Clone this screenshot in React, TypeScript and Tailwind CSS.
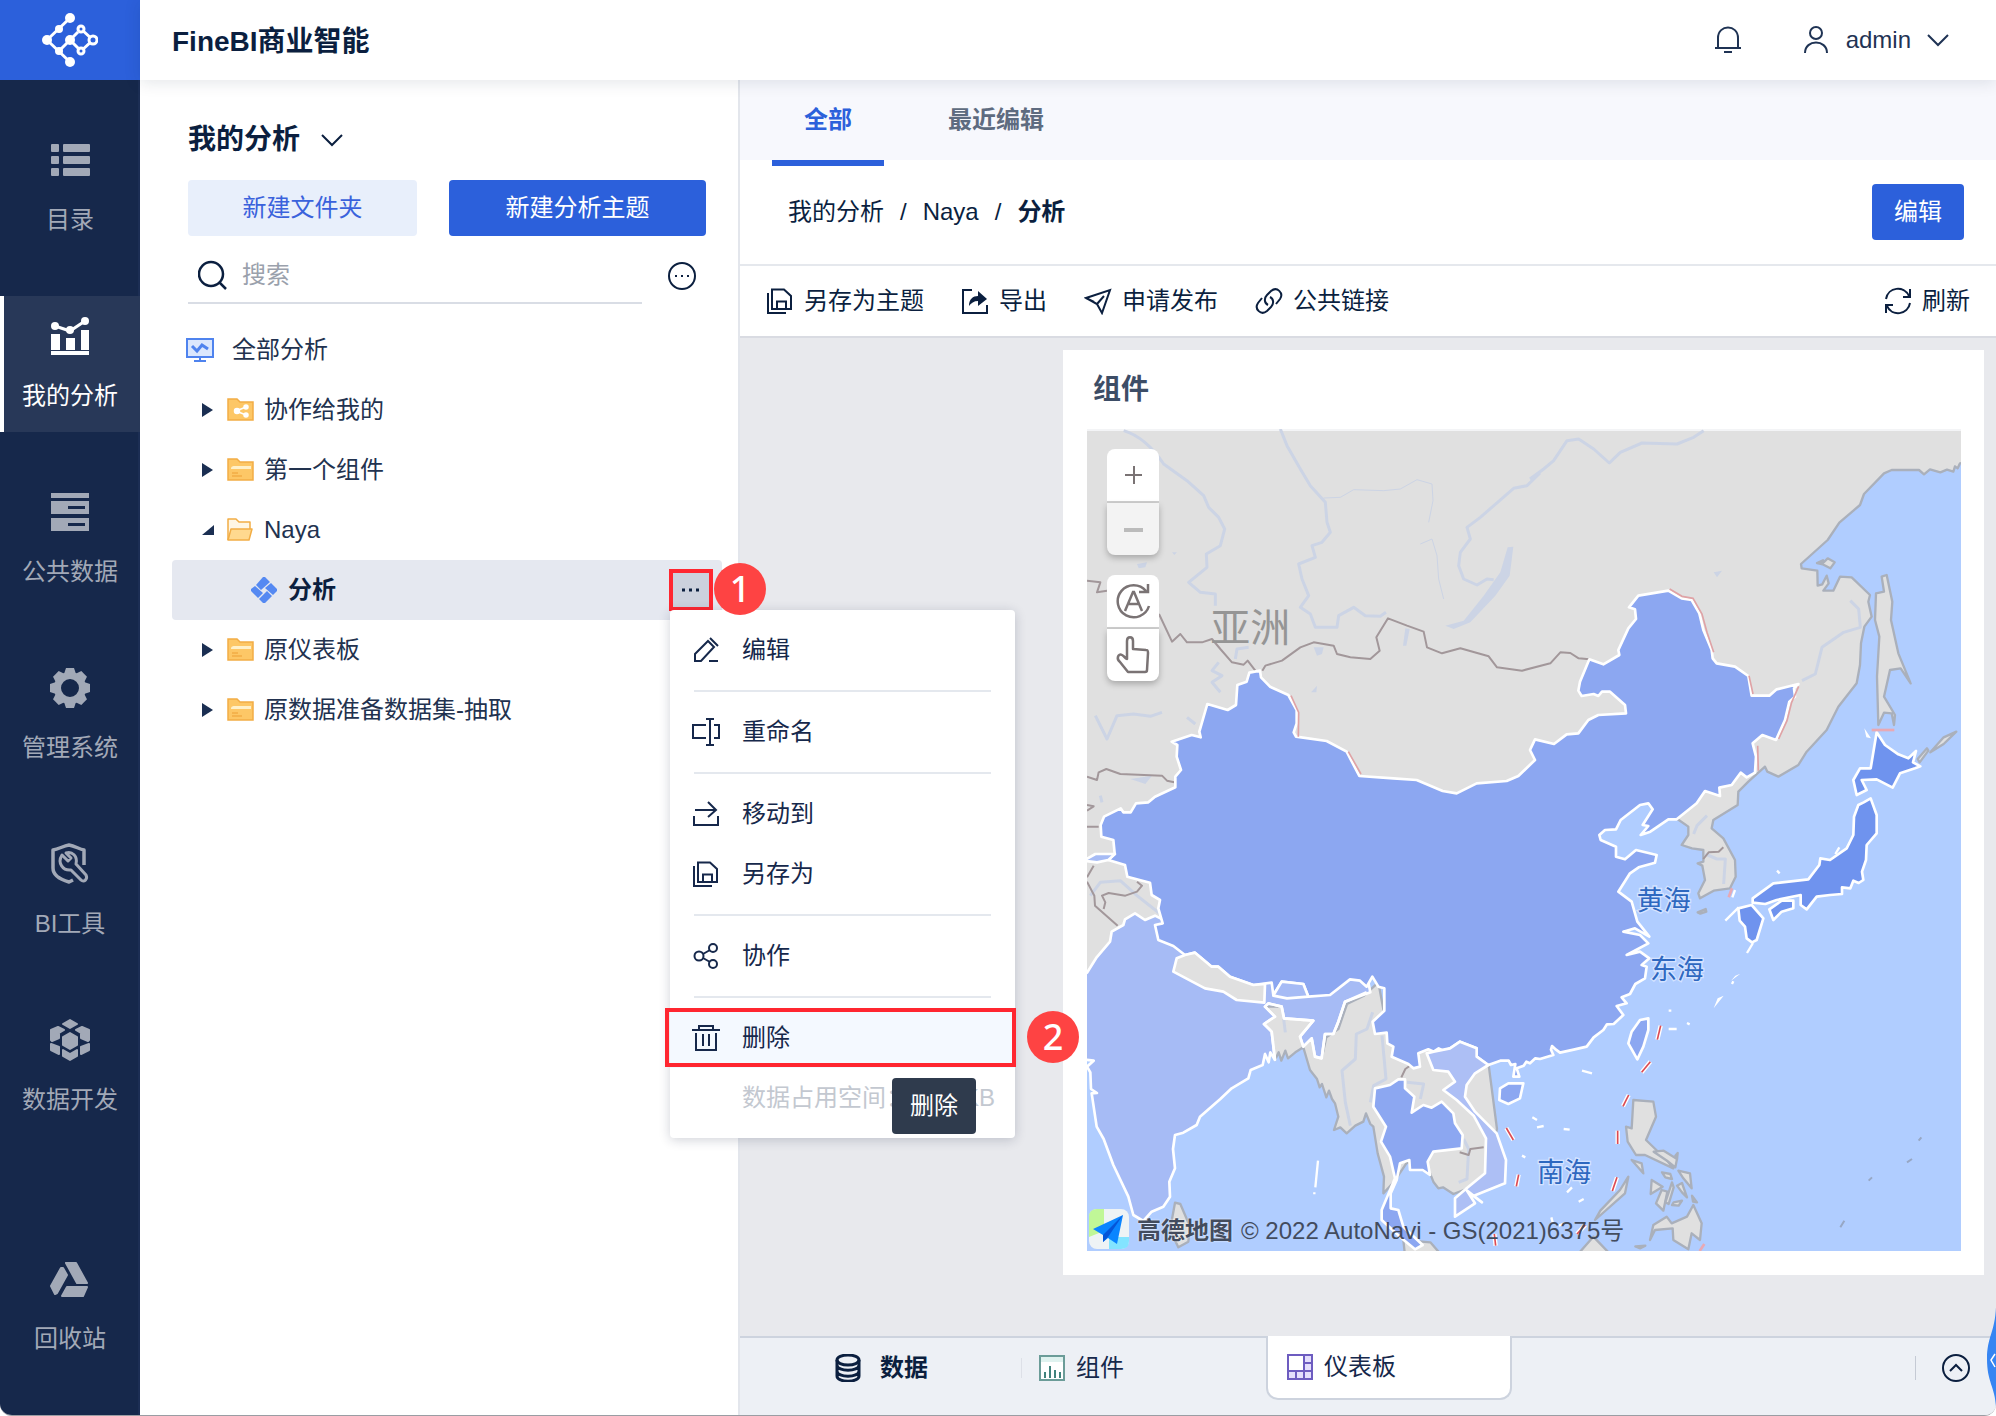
import type { ReactNode } from 'react'

interface IconProps {
  children: ReactNode
  className?: string
}

interface MenuItem {
  label: string
  icon: ReactNode
  divider?: boolean
  active?: boolean
}

function Icon({ children, className = '' }: IconProps) {
  return (
    <svg
      viewBox="0 0 28 28"
      fill="none"
      stroke="currentColor"
      strokeWidth="2"
      aria-hidden="true"
      className={`h-7 w-7 shrink-0 ${className}`}
    >
      {children}
    </svg>
  )
}

const saveAsIcon = (
  <Icon>
    <path d="M6 2.5 H18 L25 9 V22 H6 Z M11 22 V14.5 H20 V22 M2 6 V26 H20" />
  </Icon>
)

const chevronDown = (
  <svg viewBox="0 0 22 14" fill="none" stroke="currentColor" strokeWidth="2" aria-hidden="true" className="h-[14px] w-[22px] shrink-0">
    <path d="M1 2 L11 12 L21 2" />
  </svg>
)

const gearAngles = [0, 45, 90, 135, 180, 225, 270, 315]

const navItems = [
  {
    label: '目录',
    icon: (
      <>
        <rect x="1" y="4" width="8" height="8" rx="1" />
        <rect x="13" y="4" width="27" height="8" rx="1" />
        <rect x="1" y="16" width="8" height="8" rx="1" />
        <rect x="13" y="16" width="27" height="8" rx="1" />
        <rect x="1" y="28" width="8" height="8" rx="1" />
        <rect x="13" y="28" width="27" height="8" rx="1" />
      </>
    ),
  },
  {
    label: '我的分析',
    active: true,
    icon: (
      <>
        <path d="M1 18h9v16H1zM16 22h9v12h-9zM31 14h8v20h-8zM1 35h38v4H1z" />
        <path d="M5 10 L20 15 L35 5" fill="none" stroke="currentColor" strokeWidth="3" />
        <circle cx="5" cy="10" r="4" />
        <circle cx="20" cy="14" r="4" />
        <circle cx="35" cy="5" r="4" />
      </>
    ),
  },
  {
    label: '公共数据',
    icon: (
      <path
        fillRule="evenodd"
        d="M1 1h38v5H1zM1 9h38v13H1zM18 14v3h17v-3zM1 26h38v13H1zM18 31v3h17v-3z"
      />
    ),
  },
  {
    label: '管理系统',
    icon: (
      <>
        <circle cx="20" cy="20" r="12.5" fill="none" stroke="currentColor" strokeWidth="7" />
        {gearAngles.map((angle) => (
          <path key={angle} d="M14 6 L16 0 H24 L26 6 Z" transform={`rotate(${angle} 20 20)`} />
        ))}
      </>
    ),
  },
  {
    label: 'BI工具',
    icon: (
      <g fill="none" stroke="currentColor" strokeLinejoin="round">
        <path d="M23 36 L19 38 C12 36 3 32 3 24 V6 C9 5 13 2 19 1 C25 2 29 5 34 6 V21" strokeWidth="3.5" />
        <path d="M12 11 L18 17 L21 14 L16 9 C22 7 28 12 26 20 L36 31 C38 35 34 39 31 36 L21 26 C13 27 7 19 12 11 Z" strokeWidth="3" />
      </g>
    ),
  },
  {
    label: '数据开发',
    icon: (
      <g stroke="currentColor" strokeLinejoin="round" strokeWidth="2">
        <path d="M20 0 L27 4 L20 8 L13 4Z" />
        <path d="M20 13 L27 17 V25 L20 29 L13 25 V17Z" />
        <path d="M8 7 L14 10 L9 13 V18 L2 21 L1 20 V10Z" />
        <path d="M32 7 L26 10 L31 13 V18 L38 21 L39 20 V10Z" />
        <path d="M1 24 L9 27 V34 L1 30Z" />
        <path d="M39 24 L31 27 V34 L39 30Z" />
        <path d="M13 30 L20 34 L27 30 V36 L20 40 L13 36Z" />
      </g>
    ),
  },
  {
    label: '回收站',
    bottom: true,
    icon: (
      <g stroke="currentColor" strokeLinejoin="round" strokeWidth="2">
        <path d="M16 4 H26 L37 24 H27 Z" />
        <path d="M11 9 H13 L17 16 L7 34 L5 35 L1 27 Z" />
        <path d="M17 28 H37 L33 37 H12 Z" />
      </g>
    ),
  },
]

const menuItems: MenuItem[] = [
  {
    label: '编辑',
    divider: true,
    icon: (
      <Icon>
        <path d="M3 25 V18 L16 5 L22 11 L9 25 Z M18 2 L26 10 M17 25 H26" />
      </Icon>
    ),
  },
  {
    label: '重命名',
    divider: true,
    icon: (
      <Icon>
        <path d="M14 7 H1 V20 H14 M22 7 H27 V20 H22 M18 1 V27 M14 1 H22 M14 27 H22" />
      </Icon>
    ),
  },
  {
    label: '移动到',
    icon: (
      <Icon>
        <path d="M3 10 H24 M16 2 L24 10 L16 17 M2 16 V25 H26 V16" />
      </Icon>
    ),
  },
  { label: '另存为', divider: true, icon: saveAsIcon },
  {
    label: '协作',
    divider: true,
    icon: (
      <Icon>
        <circle cx="7" cy="14" r="4.5" />
        <circle cx="21" cy="6" r="4" />
        <circle cx="21" cy="22" r="4" />
        <path d="M11 12 L18 8 M11 16 L18 20" />
      </Icon>
    ),
  },
  {
    label: '删除',
    active: true,
    icon: (
      <Icon>
        <path d="M0 6 H28 M7 6 V2 H21 V6 M4 9 V26 H24 V9 M11 10 V22 M17 10 V22" />
      </Icon>
    ),
  },
]

const tools = [
  { label: '另存为主题', icon: saveAsIcon },
  {
    label: '导出',
    icon: (
      <Icon>
        <path d="M11 3 H2 V26 H26 V18" />
        <path d="M8 19 C8 12 12 9 17 9 V4 L26 12 L17 19 V14 C13 14 10 16 8 19 Z" fill="currentColor" stroke="none" />
      </Icon>
    ),
  },
  {
    label: '申请发布',
    icon: (
      <Icon>
        <path d="M2 11 L26 3 L18 26 L13 17 Z M13 17 L20 9 M2 11 L10 15" />
      </Icon>
    ),
  },
  {
    label: '公共链接',
    icon: (
      <Icon>
        <path d="M13 18 C9 16 9 11 12 8 L16 4 C22 -1 29 6 25 12 L21 17 M15 10 C19 12 19 17 16 20 L12 24 C6 29 -1 22 3 16 L7 11" />
      </Icon>
    ),
  },
]

function Sidebar() {
  return (
    <nav className="flex w-[140px] shrink-0 flex-col bg-[#16284b]">
      <a href="#home" aria-label="FineBI" className="flex h-20 shrink-0 items-center justify-center bg-[#2c60db] text-white">
        <svg viewBox="0 0 56 56" fill="currentColor" stroke="currentColor" strokeWidth="3" aria-hidden="true" className="h-14 w-14">
          <path d="M5 28 L28 6 M5 28 L28 50 M17 39 L28 28 L39 39 M39 17 L51 28 L39 39 M28 28 L36 20" fill="none" />
          <g stroke="none">
            <circle cx="28" cy="6" r="5" />
            <circle cx="5" cy="28" r="5" />
            <circle cx="28" cy="28" r="5" />
            <circle cx="28" cy="50" r="5" />
            <circle cx="17" cy="17" r="4" />
            <circle cx="17" cy="39" r="4" />
          </g>
          <g fill="#2c60db">
            <circle cx="39" cy="17" r="3" />
            <circle cx="39" cy="39" r="3" />
            <circle cx="51" cy="28" r="4" />
          </g>
        </svg>
      </a>
      <ul className="flex flex-1 flex-col gap-10 py-10 shadow-[inset_-2px_0_0_#1c2e54]">
        {navItems.map((item) => (
          <li key={item.label} className={item.bottom ? 'mt-auto' : ''}>
            <a
              href="#nav"
              className={`flex h-[136px] flex-col items-center gap-6 pt-5 text-2xl leading-8 ${
                item.active ? 'bg-[#283858] text-white shadow-[inset_4px_0_0_#fff]' : 'text-[#a2a9b7]'
              }`}
            >
              <svg viewBox="0 0 40 40" fill="currentColor" aria-hidden="true" className="h-10 w-10 shrink-0 overflow-visible">
                {item.icon}
              </svg>
              {item.label}
            </a>
          </li>
        ))}
      </ul>
    </nav>
  )
}

function Header() {
  return (
    <header className="relative z-10 flex h-20 shrink-0 items-center justify-between bg-white pl-8 pr-[47px] shadow-[0_2px_16px_rgba(20,30,60,0.12)]">
      <h1 className="pt-1 text-[28px] font-bold leading-10">FineBI商业智能</h1>
      <div className="flex items-center gap-[60px] text-[#1f3354]">
        <button type="button" aria-label="消息">
          <Icon>
            <path d="M1 22 H27 M4 22 V12 C4 -2 24 -2 24 12 V22 M10 26 H18" />
          </Icon>
        </button>
        <button type="button" className="flex items-center gap-4 text-2xl">
          <Icon>
            <circle cx="14" cy="7" r="6" />
            <path d="M3 27 C3 13 25 13 25 27" />
          </Icon>
          admin
          {chevronDown}
        </button>
      </div>
    </header>
  )
}

function Folder({ kind }: { kind: string }) {
  return (
    <svg viewBox="0 0 28 28" aria-hidden="true" className="h-7 w-7 shrink-0">
      {kind === 'open' ? (
        <g stroke="#f2ad45" strokeWidth="1.5" strokeLinejoin="round">
          <path d="M2 24 V3 H10 L13 6 H24 V13" fill="#fff6e3" />
          <path d="M2 24 L5 13 H26 L23 24 Z" fill="#ffd98f" />
        </g>
      ) : (
        <path d="M2 24 V3 H11 L14 6 H27 V24 Z" fill="#fdc766" stroke="#f2ad45" strokeWidth="1.5" />
      )}
      {kind === 'closed' && (
        <>
          <path d="M5 13 C5 10 7 10 9 10 H25 V13 Z" fill="#fff0c8" />
          <path d="M6 17 H12 M6 20 H16" stroke="#f2ad45" strokeWidth="1.5" />
        </>
      )}
      {kind === 'share' && (
        <g fill="#fff" stroke="#fff" strokeWidth="1.5">
          <path d="M10 15 L20 11 M10 15 L20 19" />
          <circle cx="11" cy="15" r="2.5" />
          <circle cx="20" cy="11" r="2" />
          <circle cx="20" cy="19" r="2" />
        </g>
      )}
    </svg>
  )
}

function TreeRow({ label, kind }: { label: string; kind: string }) {
  return (
    <li>
      <button type="button" className="flex h-[60px] w-full items-center pl-[30px] text-left text-2xl text-[#22324f]">
        <svg viewBox="0 0 12 16" fill="#1b2f52" aria-hidden="true" className="mr-3 h-4 w-3 shrink-0">
          {kind === 'open' ? <path d="M12 3 V13 H0 Z" /> : <path d="M0 1 L11 8 L0 15 Z" />}
        </svg>
        <Folder kind={kind} />
        <span className="pl-[10px]">{label}</span>
      </button>
    </li>
  )
}

function Badge({ children, className }: { children: ReactNode; className: string }) {
  return (
    <span
      className={`absolute flex h-[52px] w-[52px] items-center justify-center rounded-full bg-[#fe4343] font-['Noto_Sans',sans-serif] text-4xl font-medium text-white ${className}`}
    >
      {children}
    </span>
  )
}

function ContextMenu() {
  return (
    <ul className="absolute left-px top-[41px] w-[345px] rounded bg-white py-[10px] text-2xl text-[#16284b] shadow-[0_2px_12px_rgba(20,30,60,0.2)]">
      {menuItems.map((item) => (
        <li key={item.label} className="relative">
          <button
            type="button"
            className={`flex h-[60px] w-full items-center gap-[22px] pl-[22px] text-left ${item.active ? 'bg-[#f4f9ff]' : ''}`}
          >
            {item.icon}
            {item.label}
          </button>
          {item.divider && <hr className="mx-6 my-[10px] border-t-2 border-[#e4e8ee]" />}
          {item.active && (
            <>
              <span className="absolute -left-[5px] -right-px top-0 h-[59px] border-4 border-[#ff2630]" />
              <Badge className="left-full top-[3px] ml-3">2</Badge>
              <span role="tooltip" className="absolute left-[222px] top-[70px] z-10 flex h-14 w-[84px] items-center justify-center rounded bg-[#2f3b4d] text-white">
                删除
              </span>
            </>
          )}
        </li>
      ))}
      <li className="flex h-[60px] items-center justify-between whitespace-nowrap pl-[72px] pr-5 text-[#c3c8d0]">
        <span>数据占用空间：</span>
        <span>KB</span>
      </li>
    </ul>
  )
}

function AnalysisPanel() {
  return (
    <aside className="relative z-[5] flex w-[600px] shrink-0 flex-col border-r-2 border-[#e3e6ec] bg-white pl-8 pr-4 pt-10">
      <button type="button" className="flex items-center gap-[21px] self-start pl-4 text-[28px] font-bold leading-10">
        我的分析
        {chevronDown}
      </button>
      <div className="mt-5 flex gap-8 pl-4 pr-4 text-2xl">
        <button type="button" className="h-14 flex-[229] rounded bg-[#e8effb] text-[#3a62dc]">
          新建文件夹
        </button>
        <button type="button" className="h-14 flex-[257] rounded bg-[#2c60db] text-white">
          新建分析主题
        </button>
      </div>
      <div className="mt-2 flex items-center gap-[26px] pl-4 pr-[26px]">
        <label className="flex h-[60px] flex-1 items-center gap-[14px] border-b-2 border-[#d9dde5] pl-[10px] pt-1">
          <svg viewBox="0 0 30 30" fill="none" stroke="currentColor" strokeWidth="2.5" className="h-[30px] w-[30px] shrink-0">
            <circle cx="13" cy="14" r="12" />
            <path d="M21 22 L28 29" />
          </svg>
          <input type="text" aria-label="搜索" placeholder="搜索" className="w-full min-w-0 text-2xl outline-none placeholder:text-[#9aa1ac]" />
        </label>
        <button type="button" aria-label="更多" className="pt-1">
          <Icon>
            <circle cx="14" cy="14" r="13" />
            <path d="M7 14 h2 M13 14 h2 M19 14 h2" />
          </Icon>
        </button>
      </div>
      <ul className="mt-4">
        <li>
          <button type="button" className="flex h-[60px] w-full items-center gap-[18px] pl-[14px] text-left text-2xl text-[#22324f]">
            <Icon className="text-[#4f83ee]">
              <rect x="1" y="3" width="26" height="18" fill="#dbe7fd" />
              <path d="M6 10 L11 15 L16 9 L22 13" strokeWidth="3" />
              <path d="M8 25 H20 M14 21 V25" />
            </Icon>
            全部分析
          </button>
        </li>
        <TreeRow label="协作给我的" kind="share" />
        <TreeRow label="第一个组件" kind="closed" />
        <TreeRow label="Naya" kind="open" />
        <li className="flex h-[60px] items-center justify-between rounded bg-[#e5e8f0] pl-[78px] pr-[9px]">
          <a href="#analysis" className="flex items-center gap-[10px] text-2xl font-bold">
            <svg viewBox="0 0 28 28" fill="#5589f2" aria-hidden="true" className="h-7 w-7 shrink-0">
              <path d="M13 1 H15 L20 6 L11 14 L6 9 Z M21 7 L27 13 V15 L23 19 L15 12 Z M5 10 L13 17 L8 22 L1 15 V13 Z M17 15 L22 20 L15 27 H13 L9 23 Z" />
            </svg>
            分析
          </a>
          <div className="relative">
            <button type="button" aria-label="更多操作" className="flex h-[42px] w-11 items-center justify-center border-4 border-[#ff2630] bg-[#ccd1dd]">
              <Icon>
                <path d="M5 14 h3 M12 14 h3 M19 14 h3" strokeWidth="3" />
              </Icon>
            </button>
            <ContextMenu />
            <Badge className="-top-[6px] left-[45px]">1</Badge>
          </div>
        </li>
        <TreeRow label="原仪表板" kind="closed" />
        <TreeRow label="原数据准备数据集-抽取" kind="closed" />
      </ul>
    </aside>
  )
}

const northLand =
  'M-20 -20 H2642 V98 L2619 103 L2612 118 L2604 112 L2599 128 L2580 122 L2560 130 L2529 121 L2511 136 L2496 123 H2414 L2391 133 L2331 195 L2319 228 L2257 281 L2222 333 L2142 405 L2144 418 L2191 425 L2192 470 L2206 466 L2219 440 L2225 463 L2209 485 L2239 485 L2259 443 L2294 445 L2349 498 L2344 518 L2354 563 L2332 593 L2322 643 L2319 708 L2309 763 L2254 833 L2219 903 L2159 968 L2134 1008 L2074 1043 L2041 1028 L2034 1013 L1984 1058 L1954 1088 L1952 1128 L1879 1173 L1874 1198 L1909 1228 L1944 1293 L1946 1343 L1929 1378 L1880 1385 L1839 1408 L1834 1393 L1854 1353 L1846 1310 L1832 1303 L1849 1298 L1849 1263 L1815 1258 L1784 1248 L1804 1218 V1193 L1771 1170 L1700 1060 L1100 1600 L-20 1660 Z'

const southeastLand =
  'M874 1660 L831 1700 L780 1725 L754 1800 L718 1825 L704 1888 L684 1883 L674 1828 L649 1853 L639 1823 L679 1775 L591 1768 L584 1733 L534 1733 L564 1763 L531 1785 L554 1808 L564 1893 L575 1870 L583 1895 L595 1865 L603 1888 L625 1870 L649 1855 L669 1923 L690 1950 L698 1975 L705 1965 L718 2005 L726 1985 L735 2010 L744 2023 L754 2063 L741 2103 L760 2095 L779 2113 L805 2090 L829 2078 L837 2053 L850 2085 L859 2093 L872 2173 L891 2243 L889 2293 L920 2260 L960 2200 L1029 2233 L1040 2260 L1054 2278 L1068 2275 L1099 2295 L1144 2278 L1194 2233 L1230 2100 L1204 1900 L1060 1850 L900 1800 Z'

const india =
  'M-20 1645 L0 1631 L29 1585 L69 1538 L74 1508 L109 1488 L114 1471 L144 1453 L174 1473 L204 1460 L560 1640 L840 1640 L850 1690 L774 1718 L754 1778 L739 1815 H714 L704 1888 L684 1883 L674 1828 L649 1853 L639 1823 L679 1775 L591 1768 L584 1733 L544 1723 L534 1733 L564 1763 L531 1785 L554 1808 L564 1893 L550 1870 L545 1900 L534 1875 L527 1908 L491 1923 L484 1948 L434 1978 L400 2010 L339 2063 L329 2088 L289 2111 L264 2118 L258 2160 L264 2218 L247 2258 L249 2303 L229 2333 L194 2348 L169 2376 L139 2358 L124 2303 L79 2208 L50 2130 L29 2093 L14 1993 L30 1992 L12 1980 L10 1930 L0 1913 L20 1895 L-20 1890 Z'

const china =
  'M519 725 L487 731 L479 758 L451 768 L447 828 L422 843 L361 825 L337 908 L341 925 L314 918 L254 938 L271 948 L269 983 L282 1023 L265 1043 L265 1075 L204 1103 L184 1120 L147 1123 L131 1150 H109 L101 1138 L51 1163 L41 1188 L43 1223 L79 1233 L83 1273 L64 1293 L114 1308 L121 1343 L189 1361 L194 1398 L219 1413 L214 1438 L227 1483 L204 1488 L214 1533 L259 1551 L294 1578 L324 1571 L374 1613 H394 L429 1643 L499 1668 L554 1661 L559 1698 L584 1658 L649 1665 L664 1703 L729 1698 L789 1651 L819 1655 L839 1673 L856 1643 L874 1673 L892 1678 V1745 L857 1778 L864 1815 L899 1811 L901 1843 L919 1853 L914 1883 L964 1905 L979 1918 L999 1913 L994 1873 L1024 1861 L1040 1868 L1055 1858 L1070 1866 L1089 1858 L1119 1838 L1169 1858 V1883 L1204 1908 L1240 1895 L1265 1895 L1272 1908 L1285 1905 L1279 1943 H1297 L1289 1918 L1310 1910 L1318 1898 L1329 1903 L1345 1888 L1359 1890 L1399 1878 L1392 1862 L1395 1851 L1407 1862 L1419 1871 L1460 1862 L1499 1853 L1520 1825 L1549 1803 L1560 1786 L1580 1785 L1609 1758 L1589 1731 L1619 1723 L1604 1705 L1629 1695 L1645 1665 L1674 1648 L1679 1613 L1664 1608 L1687 1588 L1659 1568 L1619 1578 L1684 1543 L1659 1518 L1609 1508 L1644 1498 L1687 1523 L1651 1478 L1634 1418 L1594 1388 L1629 1333 L1655 1315 L1704 1301 L1709 1278 L1647 1263 L1614 1291 L1587 1283 V1253 L1541 1233 L1537 1218 L1554 1203 L1587 1201 L1601 1173 L1659 1128 L1684 1123 L1697 1141 L1667 1188 L1684 1191 L1661 1218 L1690 1208 L1744 1171 H1769 L1829 1123 L1854 1086 L1899 1101 L1897 1076 L1934 1068 L1961 1031 L1979 1045 L2004 1031 L2007 983 L1997 943 L2026 918 L2067 933 L2094 873 L2107 818 L2124 803 L2121 778 L2134 765 L2069 781 L2047 800 H1994 L1984 741 L1944 713 L1889 703 L1877 688 L1874 663 L1849 603 L1837 553 L1814 513 L1784 508 L1744 485 L1654 500 L1626 535 L1644 541 L1647 570 L1624 598 L1594 663 L1597 678 L1549 706 L1507 691 L1479 758 L1474 785 L1484 801 L1520 795 L1534 801 L1545 788 H1569 L1614 828 L1617 853 L1534 858 L1504 873 L1474 913 L1439 916 L1401 945 L1344 931 L1329 963 L1344 993 L1294 1041 L1259 1056 L1169 1063 L1109 1093 L1067 1086 L989 1053 L919 1048 L817 1041 L779 968 L719 936 L627 923 L620 910 L629 883 L629 843 L604 798 L549 773 L522 745 Z'

const nepal = 'M259 1628 L269 1588 L294 1578 L324 1571 L374 1613 H394 L429 1643 L499 1668 L534 1665 L532 1721 L449 1713 L409 1688 L354 1678 Z'

const myanmarBorder =
  'M839 1690 L774 1718 L754 1778 L739 1815 H714 L704 1888 L684 1883 L674 1828 L649 1853 L639 1823 L679 1775 L591 1768 L584 1733 L544 1723 L534 1733 L564 1763 L531 1785 L554 1808 L564 1893'

const thailand =
  'M864 1978 L909 1968 L934 1951 H954 V1978 L982 2003 L974 2051 L1009 2028 L1034 2036 L1064 2018 L1099 2053 L1104 2083 L1127 2118 L1124 2158 L1039 2168 L1022 2198 L1029 2238 L1007 2223 H969 L967 2193 L939 2203 L929 2253 L911 2293 V2338 L934 2343 L949 2393 L1007 2448 L984 2461 L944 2428 L884 2373 L884 2343 L924 2248 L909 2183 L882 2138 L897 2093 L859 2033 Z'

const vietnam =
  'M1019 1873 L1040 1868 L1089 1858 L1119 1838 L1169 1858 V1883 L1204 1908 L1164 1933 L1139 1968 L1134 2003 L1164 2048 L1229 2113 L1257 2193 L1254 2263 L1159 2301 L1185 2320 L1140 2285 L1164 2323 L1104 2363 V2308 L1139 2278 L1194 2233 L1197 2128 L1160 2060 L1109 2013 L1069 1983 L1104 1958 L1084 1928 L1039 1923 Z'

const japan = [
  'M2369 910 L2394 948 L2434 976 L2464 988 L2487 966 L2478 1000 L2500 1012 L2484 1018 L2439 1033 L2417 1076 L2369 1051 L2324 1053 L2339 1083 L2309 1098 L2299 1053 L2319 1018 H2351 L2361 958 Z',
  'M2314 1128 L2330 1120 L2351 1108 L2369 1158 V1213 L2339 1248 L2337 1293 L2325 1328 L2329 1353 L2315 1362 L2299 1355 L2290 1378 L2265 1375 L2265 1395 L2229 1398 L2189 1403 L2159 1441 L2141 1428 V1398 L2069 1413 L2035 1425 L1997 1421 V1408 L2059 1363 L2164 1351 L2197 1308 L2200 1288 L2229 1293 L2279 1258 L2299 1218 L2301 1163 Z',
  'M2047 1441 L2084 1415 H2119 V1438 L2084 1448 L2059 1473 Z',
  'M1954 1438 L1994 1428 L2029 1468 L2009 1533 L1995 1540 L1979 1528 L1974 1493 L1958 1475 Z',
]

const grayIslands = [
  'M2384 443 L2399 438 L2416 518 L2412 573 L2434 673 L2471 763 L2441 718 L2409 723 L2391 803 L2424 858 L2421 888 L2414 853 L2391 851 L2374 888 L2370 743 L2377 623 L2364 573 L2367 493 L2391 488 Z',
  'M1639 2013 L1699 2018 L1707 2063 L1677 2133 L1739 2193 L1759 2218 L1674 2178 H1647 L1622 2138 L1617 2093 L1634 2098 Z',
  'M1634 2193 L1664 2203 L1669 2233 Z',
  'M1774 2225 L1809 2233 L1814 2278 L1789 2248 Z',
  'M1694 2253 L1727 2273 L1691 2295 Z',
  'M1724 2283 L1741 2288 L1729 2345 L1707 2323 Z',
  'M1755 2260 L1735 2320 L1745 2325 L1760 2275 Z',
  'M1760 2320 L1785 2315 L1775 2330 L1755 2328 Z',
  'M1700 2168 L1730 2165 L1770 2190 L1765 2215 L1740 2195 Z',
  'M1770 2270 L1785 2262 L1800 2305 L1785 2290 Z',
  'M1725 2230 L1750 2235 L1755 2250 L1735 2245 Z',
  'M1765 2180 L1772 2172 L1770 2190 Z',
  'M1815 2300 L1830 2320 L1818 2318 Z',
  'M1754 2383 L1800 2363 L1819 2328 L1844 2383 L1839 2433 L1814 2413 L1804 2461 L1759 2433 L1757 2398 L1704 2403 L1689 2433 L1699 2388 L1739 2363 Z',
  'M1624 2243 L1614 2293 L1524 2373 L1540 2345 L1599 2283 Z',
  'M1469 2480 L1519 2423 L1574 2480 Z',
  'M1645 2452 L1675 2450 L1660 2458 Z',
  'M264 2321 L280 2325 L309 2393 L304 2438 L274 2455 L249 2403 Z',
  'M949 2433 L1030 2440 L1065 2480 H954 Z',
  'M2205 405 L2222 388 L2243 400 L2230 418 Z',
  'M2190 402 L2208 394 L2204 405 Z',
  'M1832 1450 L1856 1440 L1858 1448 L1840 1454 Z',
  'M2492 990 L2520 958 L2524 965 L2498 1000 Z',
  'M2530 970 L2570 925 L2608 908 L2570 945 Z',
]

const rivers = [
  'M110 5 C160 20 200 60 230 105 L300 155 L350 200 L365 235 L395 265 L413 300 L400 350 L358 375 L360 415 L305 460 L340 490 L385 495 L385 530',
  'M580 0 L600 50 L640 120 L670 170 L715 220 L720 280 L730 310 L705 340 L675 350 L685 385 L635 405 L645 450 L665 500 L640 535 L670 555 L685 595 H750 L755 560 L800 535 L835 560 L880 562 L897 550',
  'M1359 132 L1320 170 L1280 178 L1180 265 L1140 295 L1150 330 L1120 370 L1115 410 L1130 450 L1170 468 L1200 450 L1220 452',
  'M1329 150 L1370 120 L1400 95 L1440 35 L1475 30 L1520 60 L1567 102 L1600 70 L1665 42 L1770 45 L1820 25 L1850 5',
  'M2145 755 L2185 735 L2205 655 L2270 610 L2320 595 L2315 540 L2290 515',
  'M45 1120 L40 1100 M25 860 L60 930 L90 860 L140 855 L190 862 L225 850 M300 865 L325 885',
  'M395 700 L375 725 L405 740 L375 760 L400 790 M445 690 L450 660 L485 655',
  'M857 1750 L840 1800 L808 1815 L805 1890 L765 1925 L775 2020 L790 2090',
  'M885 1820 L897 1950 L860 1970 L850 2020',
  'M10 1400 L40 1360 L100 1355 L150 1400 L220 1455',
  'M1130 2130 L1145 2160 L1140 2250 L1115 2260',
  'M590 1770 L595 1810 M960 1960 L1010 1965 L1000 2010',
  'M1860 1160 L1830 1190 L1820 1215 M1855 1275 L1890 1290 L1915 1290 L1910 1365',
]

const thinRivers = ['M710 207 L760 205 L800 182 L890 185 L940 180 L990 152 L1035 165 L1038 215 L1025 280', 'M1000 345 L1035 330 L1050 380 L1055 450 L1070 510']

const borders = [
  'M0 455 L40 460 L30 490 L60 485 M216 555 L255 638 L280 615 L300 640 H345 L375 630 L400 660 L435 700 L470 707 L482 695 L505 725',
  'M526 725 L535 710 L585 695 L640 655 L680 640 L740 650 L750 675 L790 685 L850 690 L878 665 L868 625 L903 568 L960 590 L1010 608 L1020 655 L1065 673 L1120 658 L1205 682 L1230 715 L1305 725 L1390 703 L1420 670 L1450 672 L1475 688 L1507 691',
  'M0 1043 L30 1053 L35 1030 L58 1020 L100 1035 L225 1040 L240 1055 L262 1060',
  'M0 1193 L35 1193 M0 1128 L20 1132 L0 1145',
  'M0 1358 L22 1400 L24 1430 L92 1490 M20 1310 L0 1345 M50 1440 L55 1420 L45 1400 L65 1392 L115 1400 L150 1388 L165 1370 L150 1358',
  'M1849 1290 L1865 1270 L1895 1268 L1909 1255',
  'M943 1945 L955 1920 L972 1908 M1118 2170 L1145 2178 L1150 2160 L1190 2155',
]

const dashes = [
  'M1721 1790 L1711 1832',
  'M1690 1898 L1664 1930',
  'M1625 1998 L1608 2032',
  'M1592 2105 V2145',
  'M1590 2245 L1576 2286',
  'M1258 2097 L1279 2133',
  'M1295 2237 L1288 2272',
  'M1495 2388 L1470 2415',
  'M1222 2415 L1226 2450',
]

const seaLabels = [
  { text: '黄海', x: 1730, y: 1442 },
  { text: '东海', x: 1770, y: 1651 },
  { text: '南海', x: 1432, y: 2258 },
]

function MapView() {
  return (
    <svg viewBox="0 0 2622 2466" role="img" aria-label="地图" className="block w-full bg-[#b0cdff]">
      <g fill="#e0e0e0" stroke="#aab0bb" strokeWidth="7" strokeLinejoin="round">
        <path d={northLand} />
        <path d={southeastLand} />
        {grayIslands.map((d) => (
          <path key={d} d={d} />
        ))}
      </g>
      <path d="M0 0 H2622 V6 H0 Z" fill="#f3f4f6" />
      <g fill="none" stroke="#ccd4e5" strokeWidth="9" strokeLinejoin="round">
        {rivers.map((d) => (
          <path key={d} d={d} />
        ))}
      </g>
      <g fill="none" stroke="#ccd4e5" strokeWidth="3">
        {thinRivers.map((d) => (
          <path key={d} d={d} />
        ))}
      </g>
      <path d="M1262 355 L1279 353 L1268 440 L1225 500 L1150 580 L1100 600 L1075 590 L1130 575 L1190 500 L1240 430 Z M955 598 L968 600 L958 650 L948 650 Z M680 655 L710 655 L705 675 L690 680 Z M130 1050 L195 1040 L175 1065 Z M150 405 L180 400 L175 415 L155 418 Z M255 370 L270 370 L262 378 Z M672 790 L690 770 L688 790 Z M1880 430 L1905 425 L1890 445 Z" fill="#ccd4e5" />
      <g fill="none" stroke="#a2979a" strokeWidth="6" strokeLinejoin="round">
        {borders.map((d) => (
          <path key={d} d={d} />
        ))}
      </g>
      <text x="370" y="640" fill="#959595" className="text-[120px]">
        亚洲
      </text>

      <g stroke="#fff" strokeWidth="8" strokeLinejoin="round">
        <path d={india} fill="#a6bbf5" />
        <path d={china} fill="#8ca7f1" />
        <path d={nepal} fill="#e0e0e0" />
        <path d={myanmarBorder} fill="none" />
        <path d="M559 1700 L584 1658 L649 1665 L664 1703 L600 1708 Z" fill="#a6bbf5" />
        <path d="M-10 1295 L25 1275 L84 1275 L64 1293 L30 1300 Z" fill="#a6bbf5" />
        <path d={vietnam} fill="#adbff5" />
        <path d={thailand} fill="#8ca7f1" />
        <path d="M1239 1978 L1264 1963 H1309 L1299 2008 L1264 2025 L1237 2013 Z" fill="#8ca7f1" />
        <path d="M1659 1773 L1684 1768 V1803 L1669 1853 L1651 1891 L1624 1843 L1634 1808 Z" fill="#8ca7f1" />
        {japan.map((d) => (
          <path key={d} d={d} fill="#6f93ee" />
        ))}
      </g>
      <g fill="none" stroke="#dfa3a6" strokeWidth="5">
        <path d="M634 923 L635 850 L612 800 M822 1035 L784 968 M1748 480 L1785 502 L1818 508 L1845 555 L1860 610 L1880 670 M1986 740 L1998 795 M2135 772 L2114 820 L2100 875 L2075 930 M2012 950 L2014 1025" />
        <path d="M2354 903 H2422" stroke="#e8a9b4" strokeWidth="8" />
        <path d="M1925 1405 L1935 1378 M1838 2466 L1852 2445" stroke="#e8a9b4" strokeWidth="8" />
      </g>
      <path d="M1305 2180 l10 5 M1336 2065 l14 8 M1350 2095 l20 -4 M1430 2100 l18 2 M1485 1925 l30 8 M1745 1800 h24 M1800 1782 l8 4 M1745 1745 h8 M1935 1665 l4 -8 M1980 1572 l18 -30 M1915 1475 l40 -40 M2070 1325 l8 8 M2245 1275 l12 -20 M1936 1405 l8 -22 M693 2195 l-8 80 M682 2290 v6 M1393 2365 l4 15 M1415 2390 l20 -8 M1440 2290 l15 -15 M1475 2318 l15 -8" stroke="#fff" strokeWidth="7" fill="none" />
      <path d="M2332 898 L2352 928 L2338 925 Z M1880 1738 L1892 1708 L1910 1700 Z M1932 1655 L1945 1640 L1960 1634 Z" fill="#fff" />
      {dashes.map((d) => (
        <g key={d} fill="none">
          <path d={d} stroke="#fff" strokeWidth="13" />
          <path d={d} stroke="#dd4b53" strokeWidth="5" />
        </g>
      ))}
      <path d="M2260 2395 l12 -20 M2345 2255 l10 -10 M2460 2200 l15 -10 M2495 2135 l8 -10" stroke="#97a7c4" strokeWidth="6" />
      {seaLabels.map((label) => (
        <text
          key={label.text}
          x={label.x}
          y={label.y}
          textAnchor="middle"
          fill="#2e68c0"
          stroke="#d5e3ff"
          strokeWidth="8"
          paintOrder="stroke"
          className="text-[81px]"
        >
          {label.text}
        </text>
      ))}
    </svg>
  )
}

function MapCard() {
  return (
    <section className="ml-[323px] mr-3 bg-white pb-6 pl-6 pr-[23px] pt-5">
      <h2 className="pb-[19px] pl-[6px] text-[28px] font-bold leading-10 text-[#3d4d66]">组件</h2>
      <div className="relative">
        <MapView />
        <div className="absolute left-5 top-5 flex w-[52px] flex-col text-[#7a7374]">
          <button type="button" aria-label="放大" className="flex h-[54px] items-center justify-center rounded-t-lg border-b-2 border-[#cfcfcf] bg-white">
            <Icon>
              <path d="M6 14 H23 M15 5 V23" />
            </Icon>
          </button>
          <button type="button" aria-label="缩小" className="flex h-[52px] items-center justify-center rounded-b-lg bg-[#f3f3f3] text-[#bbbbbb] shadow-[0_3px_6px_rgba(0,0,0,0.25)]">
            <Icon>
              <path d="M5 15 H24" strokeWidth="4" />
            </Icon>
          </button>
          <button type="button" aria-label="自动" className="mt-5 flex h-[54px] items-center justify-center rounded-t-lg border-b-2 border-[#cfcfcf] bg-white">
            <svg viewBox="0 0 36 36" fill="none" stroke="currentColor" strokeWidth="2.5" aria-hidden="true" className="h-9 w-9">
              <path d="M31 8 A16 16 0 1 0 34 23 M33 1 V9 H24 M10 28 L18 9 H19 L27 28 M14 21 H23" />
            </svg>
          </button>
          <button type="button" aria-label="拖动" className="flex h-[52px] items-center justify-center rounded-b-lg bg-white shadow-[0_3px_6px_rgba(0,0,0,0.25)]">
            <svg viewBox="0 0 36 36" fill="none" stroke="currentColor" strokeWidth="2.5" strokeLinejoin="round" aria-hidden="true" className="h-9 w-9 overflow-visible">
              <path d="M13 35 L5 25 C1 22 3 16 7 18 C9 19 10 21 12 22 V4 C12 -1 18 -1 18 4 V12 L31 13 C33 13 33 14 33 16 L32 33 Q32 35 30 35 Z" />
            </svg>
          </button>
        </div>
        <div className="absolute -bottom-[2px] left-0 flex items-center gap-2 pl-[2px] text-[#434c5e]">
          <svg viewBox="0 0 40 40" aria-hidden="true" className="mb-1 h-10 w-10 shrink-0">
            <rect width="40" height="40" rx="8" fill="#eef3f5" />
            <path d="M8 0 H15 V22 L0 28 V8 Q0 0 8 0Z" fill="#c0f797" />
            <path d="M20 28 H40 V32 Q40 40 32 40 H20Z" fill="#83e4ff" />
            <path d="M4 20 L34 6 L28 35 L19 29 L14 33 V26 Z" fill="#0a85ff" />
            <path d="M34 6 L14 26 V33 L19 28 Z" fill="#0555d8" />
          </svg>
          <span className="text-2xl font-bold [text-shadow:0_0_2px_#fff]">高德地图</span>
          <span className="text-2xl">© 2022 AutoNavi - GS(2021)6375号</span>
        </div>
      </div>
    </section>
  )
}

function BottomTabs() {
  return (
    <footer className="relative flex shrink-0 items-start justify-between bg-[#edf0f5] pb-[15px] pl-9 pr-[26px] shadow-[inset_0_2px_0_#cdd3de]">
      <div className="flex text-2xl">
        <button type="button" className="flex h-16 w-[245px] items-center gap-[18px] pl-[58px] font-bold">
          <Icon>
            <g strokeWidth="3">
              <ellipse cx="14" cy="6" rx="11" ry="5" />
              <path d="M3 6 V22 C3 29 25 29 25 22 V6 M3 11 C3 18 25 18 25 11 M3 17 C3 24 25 24 25 17" />
            </g>
          </Icon>
          数据
        </button>
        <button type="button" className="flex h-16 w-[245px] items-center gap-[10px] text-[#16284b]">
          <span className="mr-[6px] h-5 w-px bg-[#dde0e7]" />
          <svg viewBox="0 0 28 28" fill="none" aria-hidden="true" className="h-7 w-7">
            <path d="M2 2 H26 V26 H2 Z" fill="#fff" stroke="#6b9c98" strokeWidth="2" />
            <path d="M3 3 H25 V8 H3 Z" fill="#dff2ef" />
            <path d="M7 24 V18 M12 24 V12 M17 24 V16 M22 24 V18" stroke="#3f827c" strokeWidth="2" />
          </svg>
          组件
        </button>
        <button type="button" className="flex h-16 w-[246px] items-center gap-[10px] rounded-b-xl border-2 border-t-0 border-[#cdd3de] bg-white pl-[18px] text-[#16284b]">
          <svg viewBox="0 0 28 28" fill="#e4defc" stroke="#6d5cc0" strokeWidth="2" aria-hidden="true" className="h-7 w-7">
            <path d="M2 2 H26 V26 H2 Z" />
            <path d="M2 2 H18 V18 H2 Z" fill="#fff" />
            <path d="M18 10 H26 M18 18 H26 M10 18 V26 M18 18 V26" />
          </svg>
          仪表板
        </button>
      </div>
      <div className="flex h-16 items-center gap-[26px]">
        <span className="h-6 w-px bg-[#c5cad4]" />
        <button type="button" aria-label="展开">
          <Icon>
            <circle cx="14" cy="14" r="13" />
            <path d="M8 17 L14 11 L20 17" />
          </Icon>
        </button>
      </div>
      <button type="button" aria-label="侧栏" className="absolute bottom-2 right-0">
        <svg viewBox="0 0 10 100" aria-hidden="true" className="h-[100px] w-[10px]">
          <path d="M10 0 C9 25 1 30 1 52 C1 75 9 80 10 100 Z" fill="#3685f2" />
          <path d="M9 47 L5 53 L9 60" fill="none" stroke="#fff" strokeWidth="1.5" />
        </svg>
      </button>
    </footer>
  )
}

export default function App() {
  return (
    <div className="flex min-h-screen overflow-hidden rounded-b-xl border-b border-[#9a9da3] bg-white font-['Liberation_Sans','Noto_Sans_CJK_SC',sans-serif] text-[#0b1f3f]">
      <Sidebar />
      <div className="flex min-w-0 flex-1 flex-col">
        <Header />
        <div className="flex flex-1">
          <AnalysisPanel />
          <main className="flex min-w-0 flex-1 flex-col bg-[#e8e9ed]">
            <div className="relative flex h-20 items-start gap-8 bg-[#f7f8fd] pl-8 text-2xl font-bold">
              <button type="button" className="h-[86px] border-b-[6px] border-[#2c60db] px-8 text-[#2c60db]">
                全部
              </button>
              <button type="button" className="h-20 px-8 text-[#5e6b80]">
                最近编辑
              </button>
            </div>
            <div className="flex h-[106px] items-center justify-between border-b-2 border-[#e5e8ed] bg-white pl-12 pr-8 text-2xl">
              <div className="flex gap-4">
                <a href="#mine">我的分析</a>
                <span>/</span>
                <a href="#naya">Naya</a>
                <span>/</span>
                <span className="font-bold">分析</span>
              </div>
              <button type="button" className="h-14 rounded bg-[#2c60db] px-[22px] text-white">
                编辑
              </button>
            </div>
            <div className="flex h-[72px] items-center gap-[37px] border-b-2 border-[#d9dbe2] bg-white px-[26px] text-2xl">
              {tools.map((tool) => (
                <button key={tool.label} type="button" className="flex items-center gap-[10px]">
                  {tool.icon}
                  {tool.label}
                </button>
              ))}
              <button type="button" className="ml-auto flex items-center gap-[10px]">
                <Icon>
                  <path d="M2 12 C4 0 20 -2 25 9 M26 2 V10 H19 M26 16 C24 28 8 30 3 19 M2 26 V18 H9" />
                </Icon>
                刷新
              </button>
            </div>
            <div className="flex-1 pb-[60px] pt-3">
              <MapCard />
            </div>
            <BottomTabs />
          </main>
        </div>
      </div>
    </div>
  )
}
